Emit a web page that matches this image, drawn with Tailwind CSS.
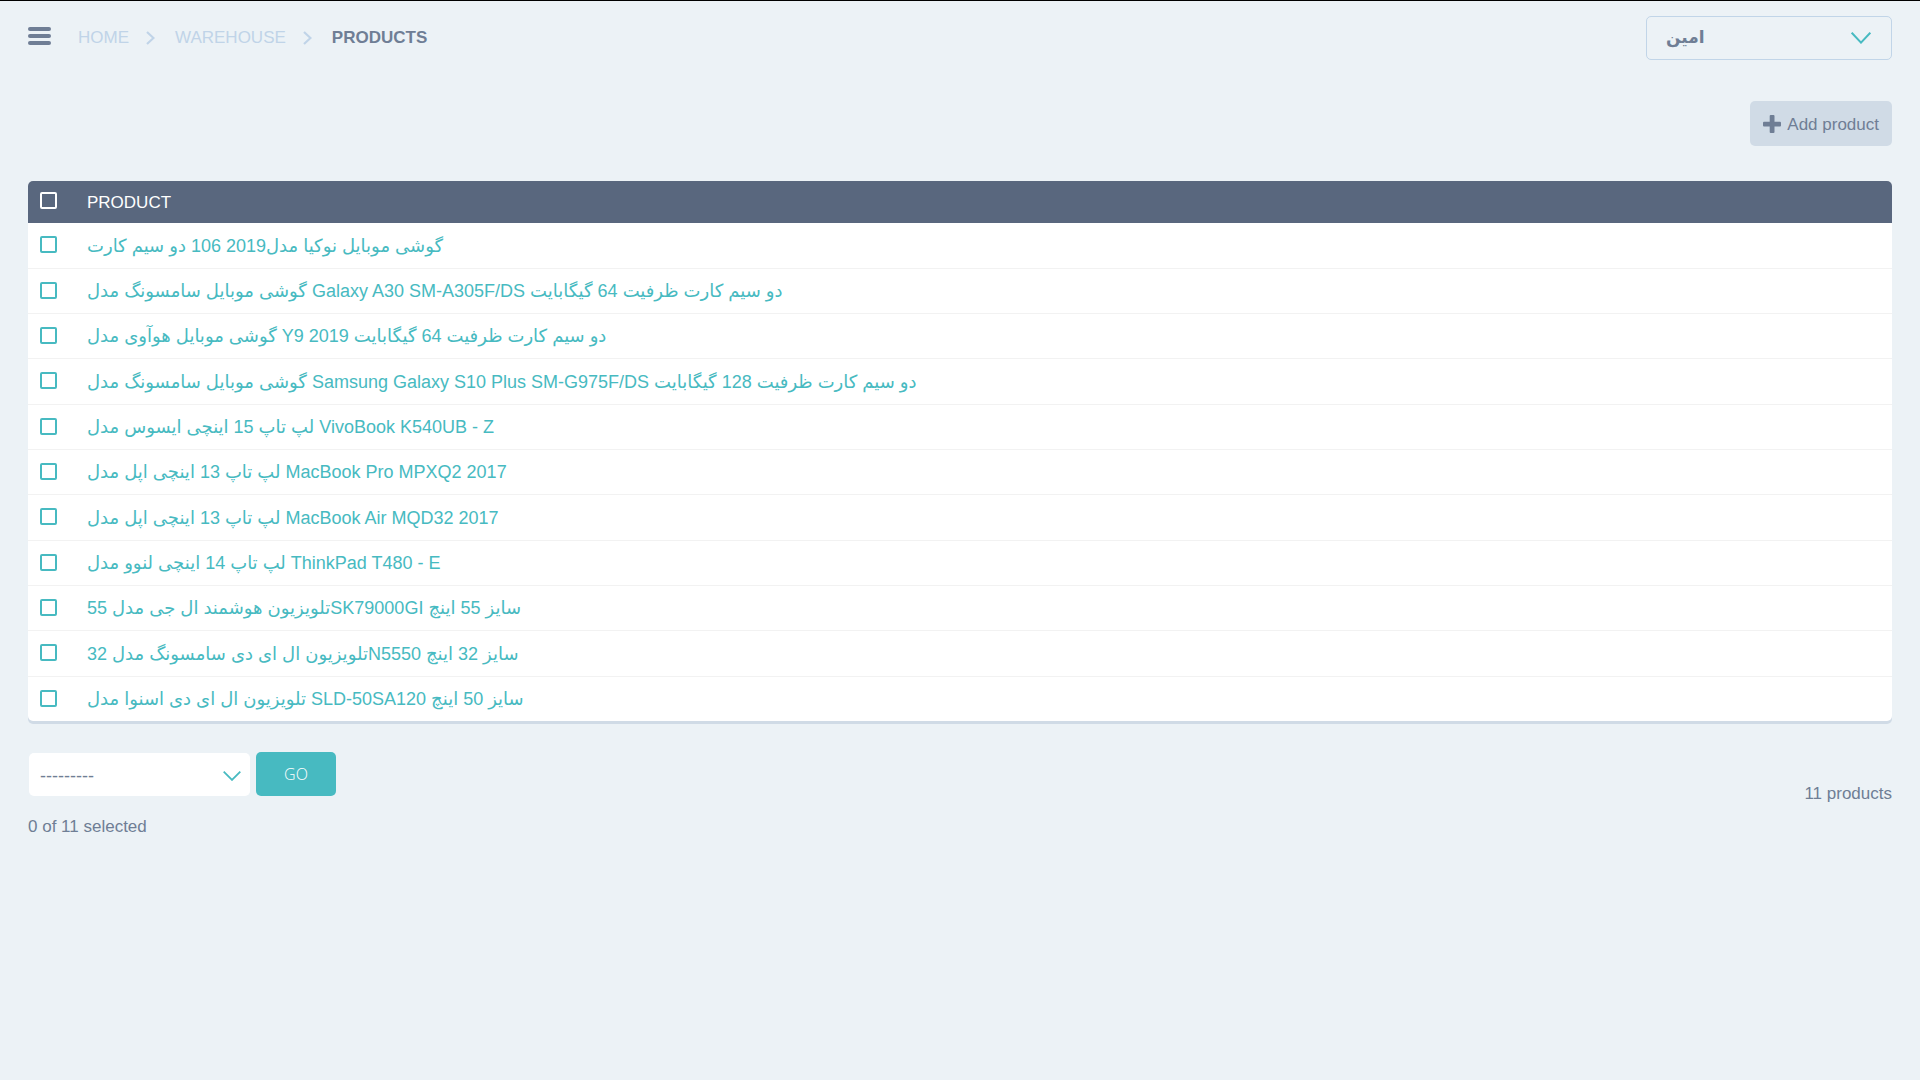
<!DOCTYPE html>
<html lang="en">
<head>
<meta charset="utf-8">
<title>Products</title>
<script src="https://cdn.jsdelivr.net/npm/@tailwindcss/browser@4"></script>
</head>
<body class="min-h-screen border-t border-black bg-[#ecf2f6] px-7 pt-[13px] font-['Liberation_Sans','DejaVu_Sans',sans-serif] text-[17px] leading-5 text-[#6f7e95]">
<header class="flex h-12 items-center justify-between">
  <div class="flex items-center">
    <button type="button" aria-label="Menu" class="mr-[27px] pb-1">
      <svg class="block h-[18px] w-[23px]" viewBox="0 0 23 18" fill="currentColor"><rect width="23" height="4" rx="2"/><rect y="7" width="23" height="4" rx="2"/><rect y="14" width="23" height="4" rx="2"/></svg>
    </button>
    <nav aria-label="Breadcrumb" class="flex items-center text-[#c0d4e8]">
      <a href="#">HOME</a>
      <svg class="ml-[17px] mr-5 h-3.5 w-[9px]" viewBox="0 0 9 14" fill="none" stroke="currentColor" stroke-width="2.2"><path d="M1 1l6.5 6L1 13"/></svg>
      <a href="#">WAREHOUSE</a>
      <svg class="ml-[17px] mr-5 h-3.5 w-[9px]" viewBox="0 0 9 14" fill="none" stroke="currentColor" stroke-width="2.2"><path d="M1 1l6.5 6L1 13"/></svg>
      <span class="font-bold text-[#6f7e95]" aria-current="page">PRODUCTS</span>
    </nav>
  </div>
  <div class="relative">
    <select aria-label="User" class="block h-11 w-[246px] appearance-none rounded-[5px] border border-[#c1d5e8] bg-transparent px-[19px] font-bold"><option>امین</option></select>
    <svg class="pointer-events-none absolute right-[21px] top-4 h-3 w-5" viewBox="0 0 20 12" fill="none" stroke="#47bac1" stroke-width="2"><path d="M.7.7L10 10.6L19.3.7"/></svg>
  </div>
</header>
<main>
  <div class="mt-[39px] flex justify-end">
    <a href="#" class="flex h-[45px] items-center gap-1.5 rounded-[5px] bg-[#d0dbe6] px-[13px]">
      <svg class="h-[18px] w-[18px]" viewBox="0 0 18 18" fill="currentColor"><rect x="6.7" width="4.8" height="18" rx="1"/><rect y="6.7" width="18" height="4.8" rx="1"/></svg>
      <span class="pt-0.5">Add product</span>
    </a>
  </div>
  <form>
    <table class="mt-[35px] w-full border-separate border-spacing-0 rounded-[5px] bg-white text-left shadow-[0_3px_0_0_#d0dbe6]">
      <thead class="bg-[#59677e] text-white">
        <tr class="h-[42px]">
          <th class="w-[59px] rounded-tl-[5px] pb-1 pl-3 align-middle"><input type="checkbox" aria-label="Select all products" class="block size-[17px] appearance-none rounded-[2px] border-2 border-white"></th>
          <th class="rounded-tr-[5px] pt-0.5 align-middle font-normal">PRODUCT</th>
        </tr>
      </thead>
      <tbody class="text-lg leading-6 text-[#47bac1] [&>tr]:h-[45px] [&>tr:last-child]:h-11 [&>tr:nth-child(3n+1)]:h-[46px] [&_input]:block [&_input]:size-[17px] [&_input]:appearance-none [&_input]:rounded-[2px] [&_input]:border-2 [&_input]:border-[#47bac1] [&_td]:border-b [&_td]:border-[#f2f2f2] [&_td]:align-middle [&_td:first-child]:pl-3 [&_td:first-child]:pb-0.5 [&>tr:last-child>td]:border-b-0">
        <tr><td><input type="checkbox" aria-labelledby="p1"></td><td><a id="p1" href="#">گوشی موبایل نوکیا مدل2019 106 دو سیم کارت</a></td></tr>
        <tr><td><input type="checkbox" aria-labelledby="p2"></td><td><a id="p2" href="#">گوشی موبایل سامسونگ مدل Galaxy A30 SM-A305F/DS دو سیم کارت ظرفیت 64 گیگابایت</a></td></tr>
        <tr><td><input type="checkbox" aria-labelledby="p3"></td><td><a id="p3" href="#">گوشی موبایل هوآوی مدل Y9 2019 دو سیم کارت ظرفیت 64 گیگابایت</a></td></tr>
        <tr><td><input type="checkbox" aria-labelledby="p4"></td><td><a id="p4" href="#">گوشی موبایل سامسونگ مدل Samsung Galaxy S10 Plus SM-G975F/DS دو سیم کارت ظرفیت 128 گیگابایت</a></td></tr>
        <tr><td><input type="checkbox" aria-labelledby="p5"></td><td><a id="p5" href="#">لپ تاپ 15 اینچی ایسوس مدل VivoBook K540UB - Z</a></td></tr>
        <tr><td><input type="checkbox" aria-labelledby="p6"></td><td><a id="p6" href="#">لپ تاپ 13 اینچی اپل مدل MacBook Pro MPXQ2 2017</a></td></tr>
        <tr><td><input type="checkbox" aria-labelledby="p7"></td><td><a id="p7" href="#">لپ تاپ 13 اینچی اپل مدل MacBook Air MQD32 2017</a></td></tr>
        <tr><td><input type="checkbox" aria-labelledby="p8"></td><td><a id="p8" href="#">لپ تاپ 14 اینچی لنوو مدل ThinkPad T480 - E</a></td></tr>
        <tr><td><input type="checkbox" aria-labelledby="p9"></td><td><a id="p9" href="#">تلویزیون هوشمند ال جی مدل 55SK79000GI سایز 55 اینچ</a></td></tr>
        <tr><td><input type="checkbox" aria-labelledby="p10"></td><td><a id="p10" href="#">تلویزیون ال ای دی سامسونگ مدل 32N5550 سایز 32 اینچ</a></td></tr>
        <tr><td><input type="checkbox" aria-labelledby="p11"></td><td><a id="p11" href="#">تلویزیون ال ای دی اسنوا مدل SLD-50SA120 سایز 50 اینچ</a></td></tr>
      </tbody>
    </table>
    <div class="mt-[31px] flex items-start justify-between">
      <div>
        <div class="flex items-end gap-1.5">
          <div class="relative pl-px">
            <select aria-label="Action" class="block h-[43px] w-[221px] appearance-none rounded-[5px] bg-white px-[11px] pt-0.5 text-lg"><option>---------</option></select>
            <svg class="pointer-events-none absolute right-[9px] top-[18px] h-2.5 w-[18px]" viewBox="0 0 18 10" fill="none" stroke="#47bac1" stroke-width="1.8"><path d="M.7.7L9 8.9L17.3.7"/></svg>
          </div>
          <button type="button" class="h-11 w-20 rounded-[5px] bg-[#47bac1] font-['Open_Sans',sans-serif] text-base font-light text-white">GO</button>
        </div>
        <p class="mt-[21px]">0 of 11 selected</p>
      </div>
      <p class="mt-8">11 products</p>
    </div>
  </form>
</main>
</body>
</html>
